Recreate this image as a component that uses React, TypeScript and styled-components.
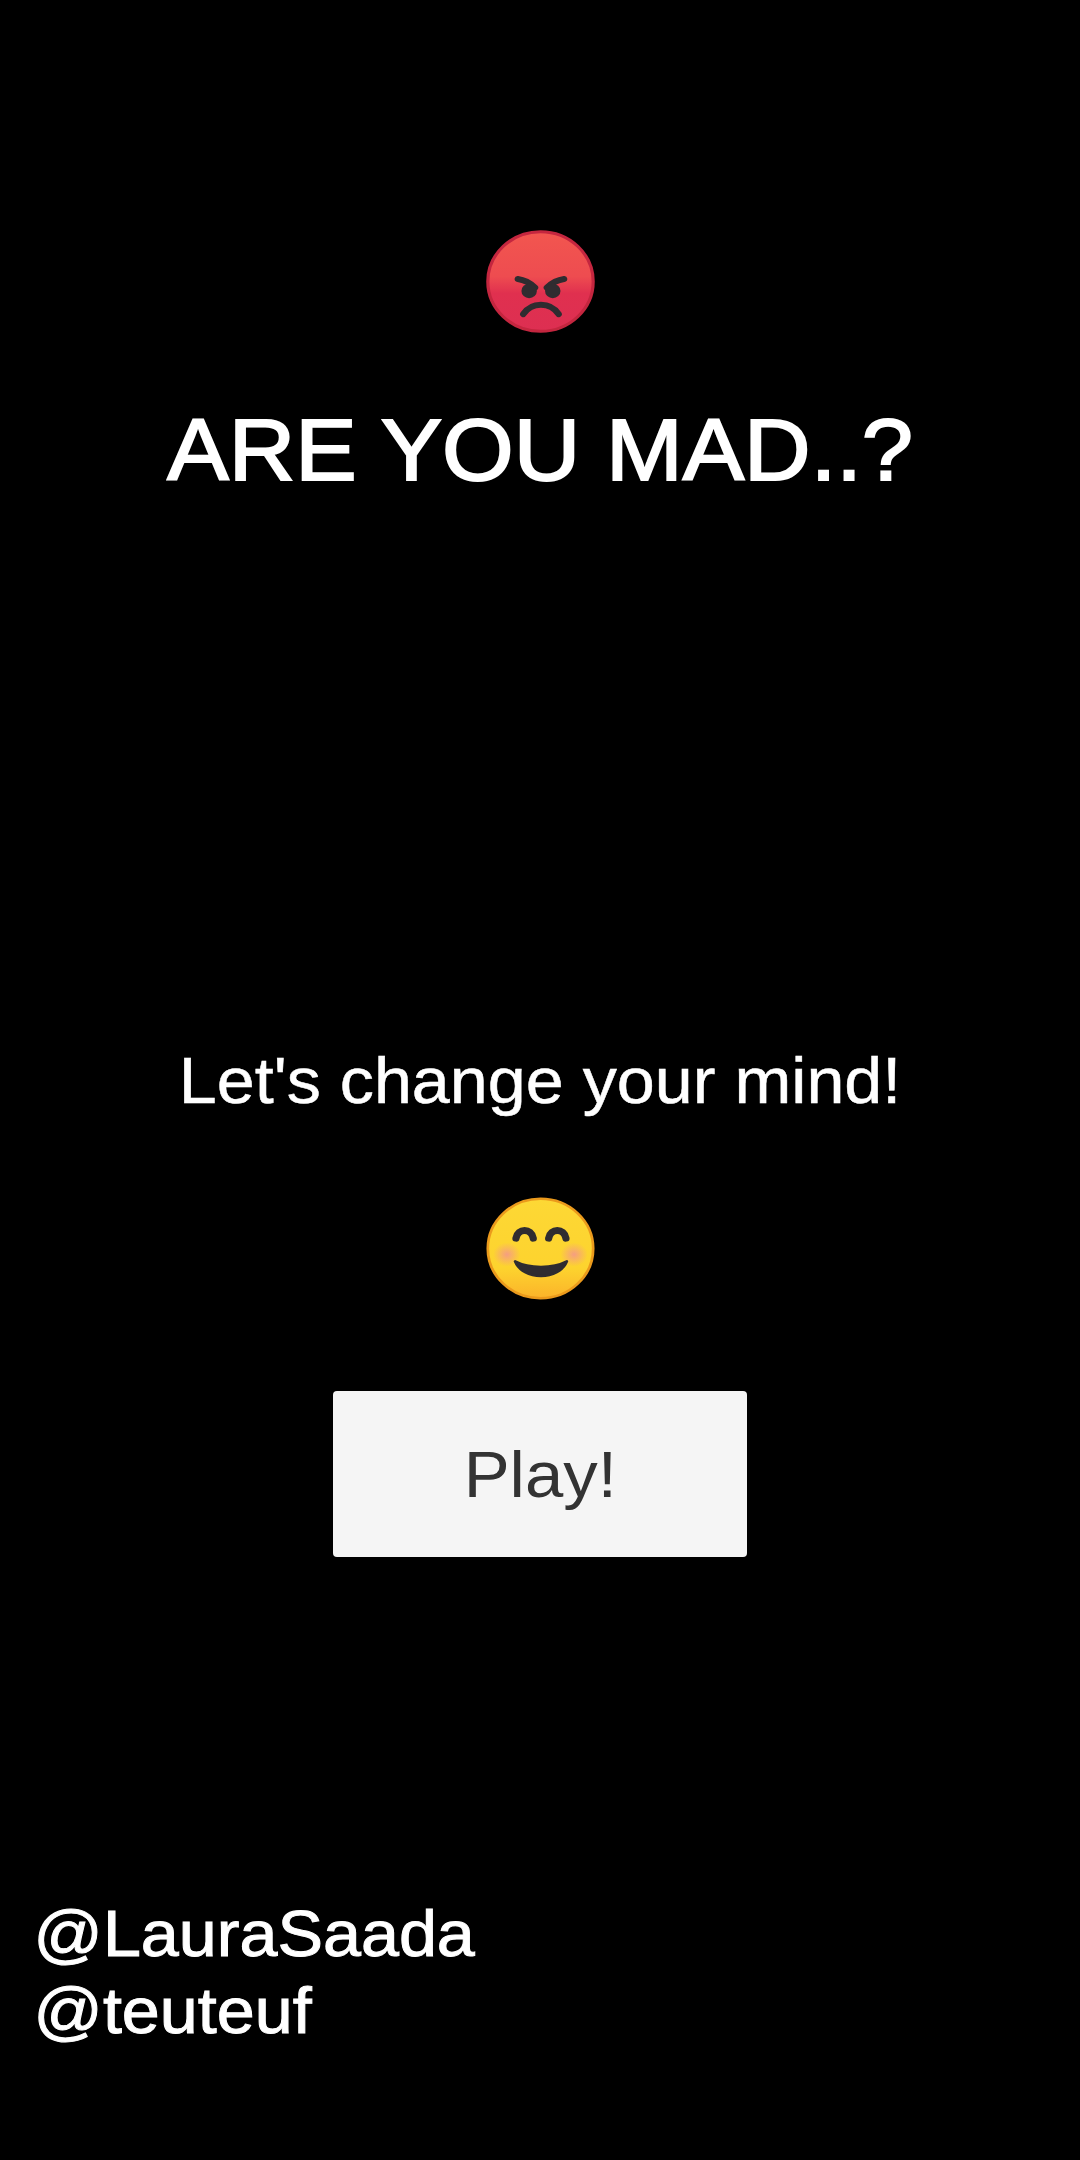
import { FC } from "react";
import styled, { createGlobalStyle } from "styled-components";

const GlobalStyle = createGlobalStyle`
  html, body {
    margin: 0;
    padding: 0;
    background: #000;
  }
`;

const AngryFace: FC = () => (
  <SFace viewBox="0 0 120 120" preserveAspectRatio="none">
    <defs>
      <linearGradient id="angryFill" x1="0" y1="0" x2="0" y2="1">
        <stop offset="0" stopColor="#f2564f" />
        <stop offset="0.45" stopColor="#ee4c50" />
        <stop offset="0.62" stopColor="#e0304f" />
        <stop offset="1" stopColor="#dd2f52" />
      </linearGradient>
    </defs>
    <circle cx="60" cy="60" r="58" fill="url(#angryFill)" stroke="#c4263f" strokeWidth="3.5" />
    <path d="M35 57 C42 58 49 62 54 67" stroke="#2f2c30" strokeWidth="7" strokeLinecap="round" fill="none" />
    <path d="M86 57 C79 58 72 62 67 67" stroke="#2f2c30" strokeWidth="7" strokeLinecap="round" fill="none" />
    <ellipse cx="47.5" cy="71" rx="8.5" ry="8.5" fill="#2f2c30" />
    <ellipse cx="73.5" cy="71" rx="8.5" ry="8.5" fill="#2f2c30" />
    <path d="M41 98 C46 90 52 87 60.5 87 C69 87 75 90 80 98" stroke="#2f2c30" strokeWidth="7" strokeLinecap="round" fill="none" />
  </SFace>
);

const SmileFace: FC = () => (
  <SFace viewBox="0 0 120 120" preserveAspectRatio="none">
    <defs>
      <linearGradient id="smileFill" x1="0" y1="0" x2="0" y2="1">
        <stop offset="0" stopColor="#fdd835" />
        <stop offset="0.7" stopColor="#fdd32e" />
        <stop offset="1" stopColor="#fbb32a" />
      </linearGradient>
      <radialGradient id="blush">
        <stop offset="0" stopColor="#f4958f" stopOpacity="0.85" />
        <stop offset="1" stopColor="#f4958f" stopOpacity="0" />
      </radialGradient>
    </defs>
    <circle cx="60" cy="60" r="58" fill="url(#smileFill)" stroke="#eb9a1c" strokeWidth="3" />
    <ellipse cx="23" cy="67" rx="15" ry="14" fill="url(#blush)" />
    <ellipse cx="97" cy="67" rx="15" ry="14" fill="url(#blush)" />
    <path d="M33 48 C35 36 50 36 52 48" stroke="#2f2c30" strokeWidth="8" strokeLinecap="round" fill="none" />
    <path d="M69 48 C71 36 86 36 88 48" stroke="#2f2c30" strokeWidth="8" strokeLinecap="round" fill="none" />
    <path d="M32 75 C41 80 50 81.5 60.5 81.5 C71 81.5 80 80 89 75 C85 86 73 92 60.5 92 C48 92 36 86 32 75 Z" fill="#2f2c30" stroke="#2f2c30" strokeWidth="3" strokeLinejoin="round" />
  </SFace>
);

export default function App() {
  return (
    <SPage>
      <GlobalStyle />
      <SHeader>
        <AngryFace />
        <STitle>ARE YOU MAD..?</STitle>
      </SHeader>
      <SMiddle>
        <SSubtitle>Let's change your mind!</SSubtitle>
        <SmileFace />
        <SPlay>
          <SPlayLabel>Play!</SPlayLabel>
        </SPlay>
      </SMiddle>
      <SCredits>
        <div>@LauraSaada</div>
        <div>@teuteuf</div>
      </SCredits>
    </SPage>
  );
}

const SPage = styled.div`
  display: flex;
  flex-direction: column;
  align-items: center;
  height: 2160px;
  background: #000;
  color: #fff;
  font-family: "Liberation Sans", Arial, sans-serif;
  overflow: hidden;
`;

const SHeader = styled.header`
  display: flex;
  flex-direction: column;
  align-items: center;
  padding-top: 230px;
`;

const SFace = styled.svg`
  display: block;
  width: 109px;
  height: 103px;
`;

const STitle = styled.h1`
  margin: 65px 0 0;
  font-size: 88px;
  line-height: 103px;
  font-weight: 400;
  white-space: nowrap;
  -webkit-text-stroke: 2px #fff;
  transform: scaleX(1.047);
`;

const SMiddle = styled.main`
  display: flex;
  flex-direction: column;
  align-items: center;
  margin-top: 541px;
`;

const SSubtitle = styled.p`
  margin: 0 0 77px;
  font-size: 65px;
  line-height: 78px;
  white-space: nowrap;
  -webkit-text-stroke: 0.5px #fff;
  transform: scaleX(1.05);
`;

const SPlay = styled.button`
  width: 414px;
  height: 166px;
  margin-top: 91px;
  padding: 0;
  border: 0;
  border-radius: 4px;
  background: #f5f5f5;
  color: #333;
  font-family: inherit;
  font-size: 65px;
`;

const SPlayLabel = styled.span`
  display: inline-block;
  transform: scaleX(1.06);
`;

const SCredits = styled.footer`
  align-self: flex-start;
  margin-top: 338px;
  padding-left: 32px;
  font-size: 65px;
  line-height: 77px;
  -webkit-text-stroke: 1px #fff;
  transform: scaleX(1.05);
  transform-origin: left;
`;
